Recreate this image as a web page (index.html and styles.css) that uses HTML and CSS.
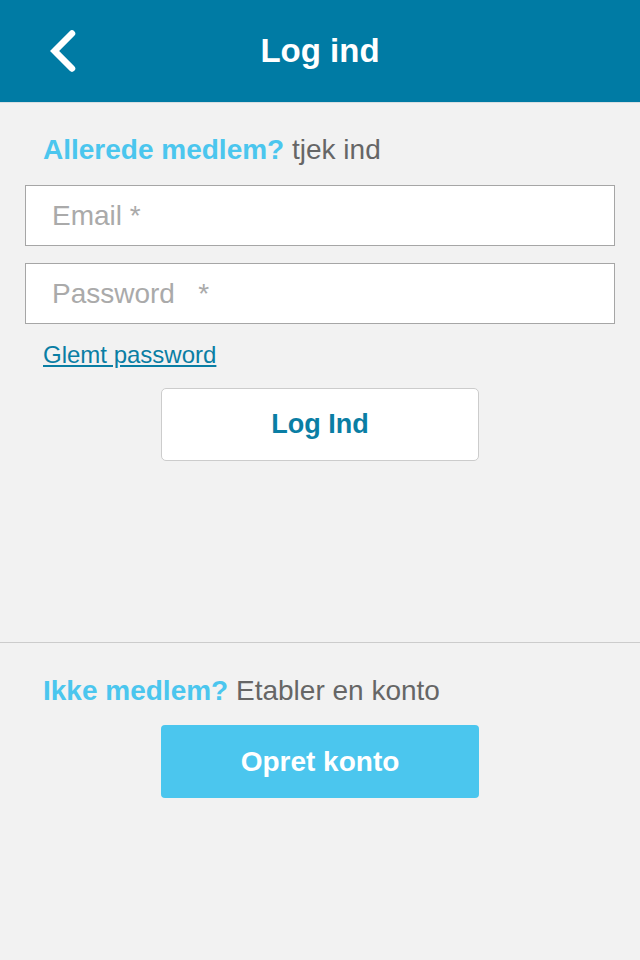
FILE: index.html
```html
<!DOCTYPE html>
<html lang="da">
<head>
<meta charset="utf-8">
<title>Log ind</title>
<link rel="stylesheet" href="styles.css">
</head>
<body>
<header class="topbar">
  <button class="back" aria-label="Tilbage">
    <svg width="30" height="46" viewBox="0 0 30 46"><path d="M25 5.5 L7.6 23 L25 40.5" fill="none" stroke="#fff" stroke-width="6.5" stroke-linecap="round" stroke-linejoin="miter"/></svg>
  </button>
  <h1 class="title">Log ind</h1>
</header>
<main>
  <section class="login">
    <p class="lead"><strong>Allerede medlem?</strong> tjek ind</p>
    <div class="field"><span class="ph">Email *</span></div>
    <div class="field field-pw"><span class="ph">Password&nbsp;&nbsp; *</span></div>
    <a class="forgot" href="#">Glemt password</a>
    <div class="btnrow"><button class="btn btn-login">Log Ind</button></div>
  </section>
  <section class="signup">
    <p class="lead"><strong>Ikke medlem?</strong> Etabler en konto</p>
    <div class="btnrow"><button class="btn btn-signup">Opret konto</button></div>
  </section>
</main>
</body>
</html>
```
FILE: styles.css
```css
* { box-sizing: border-box; }
html, body { margin: 0; padding: 0; }
body {
  width: 640px;
  height: 960px;
  background: #f2f2f2;
  font-family: "Liberation Sans", Arial, sans-serif;
  overflow: hidden;
}
.topbar {
  height: 103px;
  background: #007ba4;
  border-bottom: 1px solid #d8dfe2;
  display: flex;
  align-items: center;
  justify-content: center;
  position: relative;
}
.back {
  position: absolute;
  left: 47px;
  top: 28px;
  background: none;
  border: 0;
  padding: 0;
  width: 30px;
  height: 46px;
}
.back svg { display: block; }
.title {
  margin: 0;
  color: #fff;
  font-weight: 700;
  font-size: 33px;
  line-height: 40px;
}
.login {
  padding: 27px 25px 0 25px;
  height: 540px;
  border-bottom: 1px solid #cccccc;
}
.lead {
  margin: 0 0 0 18px;
  font-size: 28px;
  line-height: 40px;
  color: #666666;
}
.lead strong { color: #4bc6ee; font-weight: 700; }
.field {
  margin-top: 15px;
  height: 61px;
  background: #fff;
  border: 1px solid #a6a6a6;
  display: flex;
  align-items: center;
  padding-left: 26px;
}
.field + .field { margin-top: 17px; }
.field .ph {
  color: #aaaaaa;
  font-size: 28px;
}
.forgot {
  display: inline-block;
  margin: 17px 0 0 18px;
  font-size: 24px;
  line-height: 28px;
  color: #0a7ea4;
  text-decoration: underline;
}
.btnrow {
  display: flex;
  justify-content: center;
}
.login .btnrow { margin-top: 19px; }
.btn {
  width: 318px;
  height: 73px;
  border-radius: 5px;
  font-family: "Liberation Sans", Arial, sans-serif;
  font-weight: 700;
  cursor: pointer;
  padding: 0;
}
.btn-login {
  background: #fff;
  border: 1px solid #cccccc;
  color: #0a7ea4;
  font-size: 27px;
}
.signup { padding: 28px 25px 0 25px; }
.signup .btnrow { margin-top: 14px; }
.btn-signup {
  background: #4bc6ee;
  border: 0;
  color: #fff;
  font-size: 28px;
  border-radius: 4px;
}
```
